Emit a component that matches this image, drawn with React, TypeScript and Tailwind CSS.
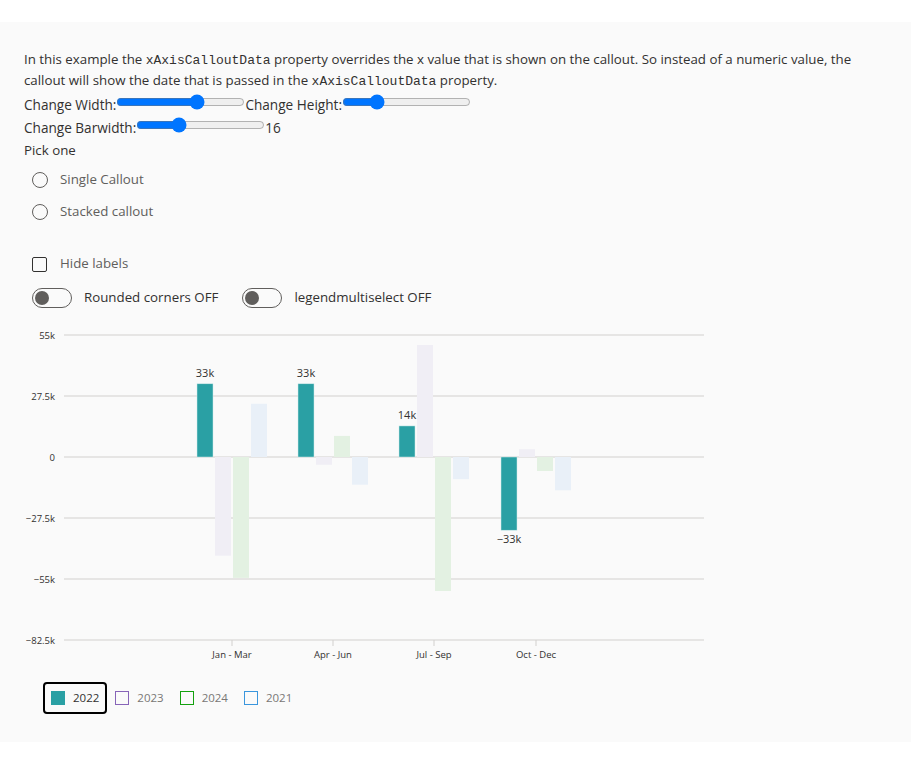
import React from "react";

const font = { fontFamily: '"Open Sans", "Noto Sans", sans-serif' };

const Y0 = 457;
const yOf = (v: number) => Y0 - (v / 27500) * 61;

const series = [
  { name: "2022", fill: "#2aa0a4", border: "#2aa0a4", active: true },
  { name: "2023", fill: "#f0eef5", border: "#8764b8", active: false },
  { name: "2024", fill: "#e3f1e2", border: "#13a10e", active: false },
  { name: "2021", fill: "#e9f0f8", border: "#3a96dd", active: false },
];

const groups = [
  { x: 232, label: "Jan - Mar", vals: [33000, -44500, -54500, 24000] },
  { x: 333, label: "Apr - Jun", vals: [33000, -3500, 9500, -12500] },
  { x: 434, label: "Jul - Sep", vals: [14000, 50500, -60400, -10000] },
  { x: 536, label: "Oct - Dec", vals: [-33000, 3500, -6300, -15000] },
];

const ticks = [
  { v: 55000, t: "55k" },
  { v: 27500, t: "27.5k" },
  { v: 0, t: "0" },
  { v: -27500, t: "\u221227.5k" },
  { v: -55000, t: "\u221255k" },
  { v: -82500, t: "\u221282.5k" },
];

function fmt(v: number) {
  const k = Math.round(Math.abs(v) / 1000);
  return (v < 0 ? "\u2212" : "") + k + "k";
}

function Chart() {
  return (
    <svg
      width={700}
      height={340}
      viewBox="20 325 700 340"
      className="block -ml-[4px]"
      style={{ fontFamily: '"Open Sans", "Noto Sans", sans-serif' }}
    >
      {ticks.map((t) => (
        <g key={t.t}>
          <line x1={64} x2={704} y1={yOf(t.v)} y2={yOf(t.v)} stroke="#d2d0ce" strokeWidth={1} />
          <text x={55} y={yOf(t.v) + 3.5} textAnchor="end" fontSize={9.5} fill="#323130">
            {t.t}
          </text>
        </g>
      ))}
      {groups.map((g) => (
        <g key={g.label}>
          <line x1={g.x} x2={g.x} y1={640} y2={646} stroke="#d2d0ce" />
          <text x={g.x} y={658} textAnchor="middle" fontSize={9.5} fill="#323130">
            {g.label}
          </text>
          {g.vals.map((v, i) => {
            const bx = g.x - 35 + i * 18;
            const top = Math.min(yOf(v), Y0);
            const h = Math.abs(yOf(v) - Y0);
            return (
              <rect
                key={i}
                x={bx}
                y={top}
                width={16}
                height={h}
                fill={series[i].fill}
                stroke={i === 0 ? "#cfeaea" : "none"}
                strokeWidth={0.5}
              />
            );
          })}
          <text
            x={g.x - 27}
            y={g.vals[0] >= 0 ? yOf(g.vals[0]) - 7 : yOf(g.vals[0]) + 13}
            textAnchor="middle"
            fontSize={11}
            fill="#323130"
          >
            {fmt(g.vals[0])}
          </text>
        </g>
      ))}
    </svg>
  );
}

function Toggle({ label }: { label: string }) {
  return (
    <div className="flex items-center gap-[12px]">
      <div className="w-[40px] h-[20px] rounded-full border border-[#605e5c] flex items-center">
        <div className="w-[14px] h-[14px] rounded-full bg-[#605e5c] ml-[2px]" />
      </div>
      <span className="text-[13.3px] text-[#323130]">{label}</span>
    </div>
  );
}

function Radio({ label }: { label: string }) {
  return (
    <div className="flex items-center h-[32px] pl-[8px]">
      <div className="w-[16px] h-[16px] rounded-full border border-[#605e5c]" />
      <span className="ml-[12px] text-[13.3px] text-[#605e5c]">{label}</span>
    </div>
  );
}

export default function App() {
  const code = "font-['Liberation_Mono',monospace] text-[13px] leading-none";
  return (
    <div className="bg-white min-h-[763px] pt-[22px]" style={font}>
      <div className="bg-[#fafafa] h-[720px] px-[24px] pt-[27px] text-[#323130]">
        <p className="text-[13.3px] leading-[21px]">
          In this example the <span className={code}>xAxisCalloutData</span> property overrides the x value that
          is shown on the callout. So instead of a numeric value, the callout will show the date that is passed in the{" "}
          <span className={code}>xAxisCalloutData</span> property.
        </p>
        <div className="text-[13.6px] leading-[23px] mt-[2px]">
          Change Width:
          <input type="range" min={0} max={100} defaultValue={64} />
          Change Height:
          <input type="range" min={0} max={100} defaultValue={24} />
        </div>
        <div className="text-[13.6px] leading-[23px]">
          Change Barwidth:
          <input type="range" min={1} max={50} defaultValue={16} />
          16
        </div>
        <div className="text-[13.3px] leading-[22px]">Pick one</div>
        <div className="mt-[3px]">
          <Radio label="Single Callout" />
          <Radio label="Stacked callout" />
        </div>
        <div className="flex items-center mt-[24px] pl-[8px] h-[24px]">
          <div className="w-[15px] h-[15px] rounded-[2px] border border-[#323130]" />
          <span className="ml-[13px] text-[13.3px] text-[#605e5c]">Hide labels</span>
        </div>
        <div className="flex items-center gap-[24px] pl-[8px] mt-[12px]">
          <Toggle label="Rounded corners OFF" />
          <Toggle label="legendmultiselect OFF" />
        </div>
        <div className="mt-[17px]">
          <Chart />
        </div>
        <div className="flex mt-[17px] ml-[19px]">
          {series.map((s) => (
            <div
              key={s.name}
              className={
                "flex items-center gap-[8px] px-[6px] h-[32px] rounded-[4px] border-2 " +
                (s.active ? "border-black" : "border-transparent")
              }
            >
              <div
                className="w-[14px] h-[14px] border"
                style={{ backgroundColor: s.active ? s.fill : "transparent", borderColor: s.border }}
              />
              <span className={"text-[11.5px] " + (s.active ? "text-[#323130]" : "text-[#797775]")}>{s.name}</span>
            </div>
          ))}
        </div>
      </div>
    </div>
  );
}
